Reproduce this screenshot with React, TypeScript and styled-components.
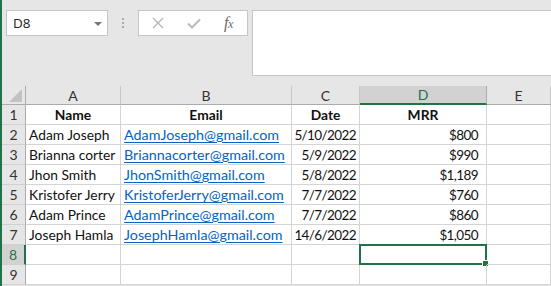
import React from "react";
import styled, { createGlobalStyle, css } from "styled-components";

const GREEN = "#217346";

const GlobalStyle = createGlobalStyle`
  html, body { margin: 0; padding: 0; background: #e6e6e6; }
  body { width: 551px; height: 286px; overflow: hidden; }
`;

const Window = styled.div`
  width: 549px;
  height: 286px;
  border-left: 2px solid ${GREEN};
  background: #e6e6e6;
  display: flex;
  flex-direction: column;
  overflow: hidden;
`;

const FormulaArea = styled.div`
  height: 86px;
  box-sizing: border-box;
  padding: 10px 0 0 4px;
  display: flex;
  align-items: flex-start;
`;

const NameBox = styled.div`
  width: 102px;
  height: 26px;
  box-sizing: border-box;
  background: #fff;
  border: 1px solid #c6c6c6;
  display: flex;
  align-items: center;
  justify-content: space-between;
  padding: 0 5px 0 6px;
  font-family: "Open Sans", "Noto Sans", sans-serif;
  font-size: 13.5px;
  color: #222;
`;

const Caret = styled.span`
  width: 0;
  height: 0;
  border-left: 4px solid transparent;
  border-right: 4px solid transparent;
  border-top: 4px solid #777;
  margin-top: 1px;
`;

const Divider = styled.div`
  width: 30px;
  height: 26px;
  display: flex;
  flex-direction: column;
  align-items: center;
  justify-content: center;
  gap: 2px;
  span {
    width: 2px;
    height: 2px;
    background: #aaa;
  }
`;

const FormulaButtons = styled.div`
  width: 110px;
  height: 26px;
  box-sizing: border-box;
  background: #fff;
  border: 1px solid #c6c6c6;
  display: flex;
  align-items: center;
  padding-left: 13px;
  gap: 23px;
`;

const Fx = styled.span`
  font-family: "Liberation Serif", "DejaVu Serif", serif;
  font-style: italic;
  font-size: 16px;
  color: #6a6a6a;
  letter-spacing: -0.5px;
  line-height: 1;
  span { font-size: 12px; }
`;

const FormulaInput = styled.div`
  flex: 1;
  margin-left: 4px;
  height: 66px;
  box-sizing: border-box;
  background: #fff;
  border: 1px solid #c6c6c6;
  border-right: none;
`;

const Grid = styled.div`
  display: grid;
  grid-template-columns: 24px 95px 171px 68px 127px 1fr;
  grid-template-rows: 19px repeat(9, 20px);
  background: #fff;
  font-family: Lato, "Open Sans", sans-serif;
  font-size: 13.8px;
  color: #111;
`;

const Corner = styled.div`
  background: #e6e6e6;
  border-right: 1px solid #ababab;
  border-bottom: 1px solid #ababab;
  position: relative;
  &::after {
    content: "";
    position: absolute;
    right: 3px;
    bottom: 2px;
    width: 0;
    height: 0;
    border-left: 13px solid transparent;
    border-bottom: 13px solid #c2c2c2;
  }
`;

const ColHeader = styled.div<{ $active?: boolean }>`
  background: #e6e6e6;
  border-right: 1px solid #c8c8c8;
  border-bottom: 1px solid #ababab;
  display: flex;
  align-items: center;
  justify-content: center;
  color: #333;
  font-size: 14px;
  ${(p) =>
    p.$active &&
    css`
      background: #d2d2d2;
      color: ${GREEN};
      border-bottom: 2px solid ${GREEN};
      border-right-color: #ababab;
    `}
`;

const RowHeader = styled.div<{ $active?: boolean }>`
  background: #e6e6e6;
  border-right: 1px solid #ababab;
  border-bottom: 1px solid #d0d0d0;
  display: flex;
  align-items: center;
  justify-content: center;
  color: #333;
  font-size: 14px;
  ${(p) =>
    p.$active &&
    css`
      background: #d2d2d2;
      color: ${GREEN};
      border-right: 2px solid ${GREEN};
    `}
`;

const Cell = styled.div<{
  $align?: "left" | "center" | "right";
  $bold?: boolean;
  $pr?: number;
  $num?: boolean;
}>`
  border-right: 1px solid #d4d4d4;
  border-bottom: 1px solid #d4d4d4;
  display: flex;
  align-items: center;
  justify-content: ${(p) =>
    p.$align === "center" ? "center" : p.$align === "right" ? "flex-end" : "flex-start"};
  padding: 0 ${(p) => p.$pr ?? 3}px 0 3px;
  white-space: nowrap;
  overflow: visible;
  font-weight: ${(p) => (p.$bold ? 700 : 400)};
  position: relative;
  ${(p) =>
    p.$num &&
    css`
      font-size: 13.5px;
      letter-spacing: -0.6px;
    `}
`;

const Link = styled.span`
  color: #0563c1;
  text-decoration: underline;
  text-underline-offset: 2px;
  font-size: 14.3px;
`;

const Selection = styled.div`
  position: absolute;
  top: -1px;
  left: -1px;
  right: -1px;
  bottom: -1px;
  border: 2px solid ${GREEN};
  pointer-events: none;
  &::after {
    content: "";
    position: absolute;
    right: -4px;
    bottom: -4px;
    width: 5px;
    height: 5px;
    background: ${GREEN};
    border: 1px solid #fff;
  }
`;

type Row = { name: string; email: string; date: string; mrr: string };

const rows: Row[] = [
  { name: "Adam Joseph", email: "AdamJoseph@gmail.com", date: "5/10/2022", mrr: "$800" },
  { name: "Brianna corter", email: "Briannacorter@gmail.com", date: "5/9/2022", mrr: "$990" },
  { name: "Jhon Smith", email: "JhonSmith@gmail.com", date: "5/8/2022", mrr: "$1,189" },
  { name: "Kristofer Jerry", email: "KristoferJerry@gmail.com", date: "7/7/2022", mrr: "$760" },
  { name: "Adam Prince", email: "AdamPrince@gmail.com", date: "7/7/2022", mrr: "$860" },
  { name: "Joseph Hamla", email: "JosephHamla@gmail.com", date: "14/6/2022", mrr: "$1,050" },
];

const cols = ["A", "B", "C", "D", "E"];

const CrossIcon = () => (
  <svg width="12" height="12" viewBox="0 0 12 12">
    <path d="M1 1 L11 11 M11 1 L1 11" stroke="#b4b4b4" strokeWidth="1.3" fill="none" />
  </svg>
);

const CheckIcon = () => (
  <svg width="14" height="11" viewBox="0 0 14 11">
    <path d="M1 5.5 L5 9.5 L13 1.5" stroke="#b8b8b8" strokeWidth="2" fill="none" />
  </svg>
);

export default function App() {
  return (
    <>
      <GlobalStyle />
      <Window>
        <FormulaArea>
          <NameBox>
            <span>D8</span>
            <Caret />
          </NameBox>
          <Divider>
            <span />
            <span />
            <span />
          </Divider>
          <FormulaButtons>
            <CrossIcon />
            <CheckIcon />
            <Fx>
              f<span>x</span>
            </Fx>
          </FormulaButtons>
          <FormulaInput />
        </FormulaArea>
        <Grid>
          <Corner />
          {cols.map((c) => (
            <ColHeader key={c} $active={c === "D"}>
              {c}
            </ColHeader>
          ))}
          <RowHeader>1</RowHeader>
          <Cell $align="center" $bold>Name</Cell>
          <Cell $align="center" $bold>Email</Cell>
          <Cell $align="center" $bold>Date</Cell>
          <Cell $align="center" $bold>MRR</Cell>
          <Cell />
          {rows.map((r, i) => (
            <React.Fragment key={r.email}>
              <RowHeader>{i + 2}</RowHeader>
              <Cell>{r.name}</Cell>
              <Cell>
                <Link>{r.email}</Link>
              </Cell>
              <Cell $align="right" $num>{r.date}</Cell>
              <Cell $align="right" $pr={8} $num>{r.mrr}</Cell>
              <Cell />
            </React.Fragment>
          ))}
          <RowHeader $active>8</RowHeader>
          <Cell />
          <Cell />
          <Cell />
          <Cell>
            <Selection />
          </Cell>
          <Cell />
          <RowHeader>9</RowHeader>
          <Cell />
          <Cell />
          <Cell />
          <Cell />
          <Cell />
        </Grid>
      </Window>
    </>
  );
}
